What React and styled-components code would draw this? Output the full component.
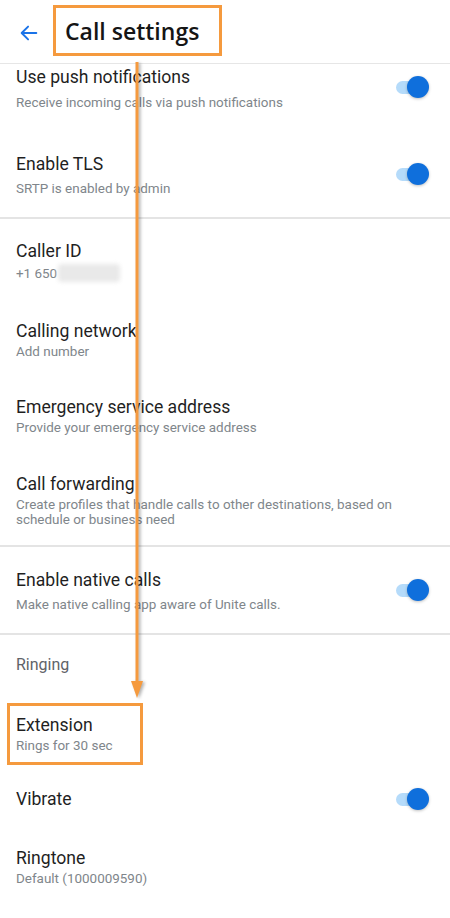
import styled, { createGlobalStyle } from "styled-components";

const GlobalStyle = createGlobalStyle`
  html, body {
    margin: 0;
    padding: 0;
    background: #ffffff;
  }
  * {
    box-sizing: border-box;
  }
`;

const settings = [
  {
    id: "general",
    rows: [
      { type: "switch", title: "Use push notifications", sub: "Receive incoming calls via push notifications" },
      { type: "switch", title: "Enable TLS", sub: "SRTP is enabled by admin" },
    ],
  },
  {
    id: "calling",
    rows: [
      { type: "text", title: "Caller ID", sub: "+1 650", masked: true, first: true },
      { type: "text", title: "Calling network", sub: "Add number" },
      { type: "text", title: "Emergency service address", sub: "Provide your emergency service address" },
      {
        type: "text",
        title: "Call forwarding",
        sub: "Create profiles that handle calls to other destinations, based on schedule or business need",
      },
    ],
  },
  {
    id: "native",
    rows: [
      { type: "switch", title: "Enable native calls", sub: "Make native calling app aware of Unite calls.", tight: true },
    ],
  },
  {
    id: "ringing",
    header: "Ringing",
    last: true,
    rows: [
      { type: "text", title: "Extension", sub: "Rings for 30 sec", marked: true },
      { type: "switch", title: "Vibrate" },
      { type: "text", title: "Ringtone", sub: "Default (1000009590)" },
    ],
  },
];

const App = () => {
  return (
    <>
      <GlobalStyle />
      <Screen>
        <Header>
          <BackButton aria-label="Back">
            <svg width="22" height="22" viewBox="0 0 24 24" fill="none">
              <path
                d="M20 12H4.5M11 5l-7 7 7 7"
                stroke="#1a73e8"
                strokeWidth="2.1"
                strokeLinecap="round"
                strokeLinejoin="round"
              />
            </svg>
          </BackButton>
          <Title>Call settings</Title>
        </Header>

        <Scroll>
          <List>
            {settings.map((section) => (
              <Section key={section.id} $last={section.last}>
                {section.header && <SectionHeader>{section.header}</SectionHeader>}
                {section.rows.map((row) =>
                  row.type === "switch" ? (
                    <SwitchRow key={row.title} $single={!row.sub} $tight={row.tight}>
                      <TextBlock>
                        <RowTitle>{row.title}</RowTitle>
                        {row.sub && <RowSub $loose>{row.sub}</RowSub>}
                      </TextBlock>
                      <Switch>
                        <Knob />
                      </Switch>
                    </SwitchRow>
                  ) : (
                    <Row key={row.title} $first={row.first}>
                      <TextBlock>
                        <RowTitle>{row.title}</RowTitle>
                        <RowSub>
                          {row.sub}
                          {row.masked && <Masked />}
                        </RowSub>
                      </TextBlock>
                      {row.marked && <Highlight />}
                    </Row>
                  )
                )}
              </Section>
            ))}
          </List>
        </Scroll>

        <Pointer width="20" height="645" viewBox="0 0 20 645">
          <line x1="10" y1="0" x2="10" y2="624" stroke="#f59a3e" strokeWidth="3" />
          <polygon points="4,619 16,619 10,636" fill="#f59a3e" />
        </Pointer>
      </Screen>
    </>
  );
};

export default App;

const Screen = styled.div`
  position: relative;
  width: 450px;
  height: 918px;
  overflow: hidden;
  background: #ffffff;
  font-family: Roboto, "Noto Sans", Arial, sans-serif;
`;

const Header = styled.header`
  position: relative;
  z-index: 2;
  height: 64px;
  display: flex;
  align-items: center;
  padding-left: 18px;
  background: #ffffff;
  border-bottom: 1px solid #e6e6e6;
`;

const BackButton = styled.button`
  width: 22px;
  height: 22px;
  padding: 0;
  border: none;
  background: none;
  display: flex;
  align-items: center;
  justify-content: center;
  margin-right: 13px;
  margin-top: 2px;
`;

const Title = styled.h1`
  margin: 0;
  width: 169px;
  height: 51px;
  margin-top: -2px;
  padding-left: 9px;
  display: flex;
  align-items: center;
  border: 3px solid #f59a3e;
  font-family: "Open Sans", "Noto Sans", sans-serif;
  font-weight: 600;
  font-size: 23px;
  color: #151515;
  white-space: nowrap;
`;

const Scroll = styled.div`
  overflow: hidden;
`;

const List = styled.div`
  margin-top: -20px;
`;

const Section = styled.section`
  border-bottom: ${({ $last }) => ($last ? "none" : "2px solid #e4e4e4")};
`;

const SectionHeader = styled.div`
  height: 60px;
  display: flex;
  align-items: center;
  padding: 0 16px;
  font-size: 16px;
  color: #5f6368;
`;

const Row = styled.div`
  position: relative;
  padding: ${({ $first }) => ($first ? "20px" : "18px")} 40px 18.5px 16px;
`;

const SwitchRow = styled.div`
  display: flex;
  align-items: center;
  justify-content: space-between;
  padding: ${({ $single, $tight }) => ($single ? "16px" : $tight ? "20.5px" : "21px")} 21px
    ${({ $single, $tight }) => ($single ? "17px" : $tight ? "20.5px" : "21px")} 16px;
`;

const TextBlock = styled.div`
  display: flex;
  flex-direction: column;
`;

const RowTitle = styled.div`
  font-size: 17.6px;
  line-height: 24px;
  color: #1f1f1f;
`;

const RowSub = styled.div`
  margin-top: ${({ $loose }) => ($loose ? "5.5px" : "1px")};
  font-size: 13.45px;
  line-height: 15px;
  color: #80868b;
  display: flex;
  align-items: center;
  flex-wrap: wrap;
`;

const Masked = styled.span`
  display: inline-block;
  width: 62px;
  height: 18px;
  margin-left: 1px;
  border-radius: 4px;
  background: #e9e9e9;
  filter: blur(2px);
`;

const Switch = styled.div`
  position: relative;
  width: 33px;
  height: 22px;
  flex-shrink: 0;

  &::before {
    content: "";
    position: absolute;
    left: 0;
    top: 5px;
    width: 28px;
    height: 13px;
    border-radius: 7px;
    background: #b5dbfa;
  }
`;

const Knob = styled.span`
  position: absolute;
  right: 0;
  top: 0;
  width: 22px;
  height: 22px;
  border-radius: 50%;
  background: #0f6fdc;
  box-shadow: 0 1px 3px rgba(0, 0, 0, 0.25);
`;

const Highlight = styled.span`
  position: absolute;
  left: 7px;
  top: 8px;
  width: 136px;
  height: 62px;
  border: 3px solid #f59a3e;
  pointer-events: none;
`;

const Pointer = styled.svg`
  position: absolute;
  left: 127px;
  top: 62px;
  z-index: 3;
  filter: drop-shadow(2px 1px 1.5px rgba(0, 0, 0, 0.3));
`;
